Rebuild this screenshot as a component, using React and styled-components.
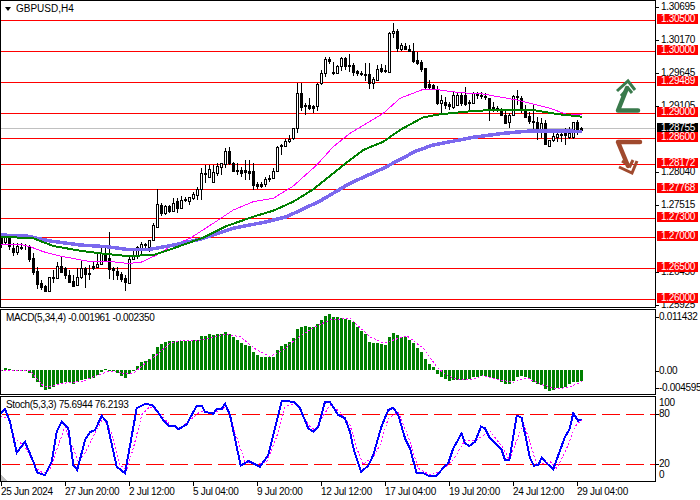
import React from "react"
import styled, { createGlobalStyle } from "styled-components"

// all chart data is kept at 3x pixels, the panes scale it down
const candles = [
  [708,745,712,732,0],[700,735,712,725,1],[705,750,712,738,0],[730,770,745,755,0],[730,765,738,755,1],[730,752,740,743,0],
  [733,750,740,742,0],[735,785,738,778,0],[760,825,775,815,0],[800,865,812,852,0],[840,870,850,860,0],[855,875,858,872,0],
  [830,875,832,872,1],[810,850,830,833,0],[785,835,797,835,1],[768,820,797,815,0],[800,835,805,825,0],[810,850,825,845,0],
  [825,860,842,858,0],[805,858,832,856,1],[782,835,805,830,1],[800,862,805,822,0],[795,840,818,823,0],[785,810,798,803,0],
  [760,805,792,802,1],[735,795,760,792,1],[745,785,760,780,0],[695,835,775,808,0],[800,838,805,810,0],[800,840,812,825,0],
  [815,845,822,838,0],[825,872,835,845,0],[770,850,778,848,1],[745,780,768,778,1],[738,778,742,768,1],[725,765,733,745,1],
  [730,755,732,735,0],[722,755,720,742,1],[670,722,676,720,1],[568,682,612,680,1],[610,650,614,638,0],[615,645,618,640,1],
  [615,640,618,632,0],[595,635,610,632,1],[595,640,602,624,0],[588,625,600,625,1],[590,605,598,601,0],[590,615,592,604,1],
  [575,600,582,594,1],[560,598,566,584,1],[505,600,520,566,1],[495,548,520,522,0],[495,535,508,530,1],[495,545,515,545,1],
  [490,530,498,520,1],[488,525,490,500,1],[445,505,452,492,1],[440,495,452,488,0],[485,515,488,514,0],[490,525,510,514,0],
  [500,530,510,518,0],[480,540,510,516,0],[480,540,512,520,0],[488,568,514,556,0],[545,565,553,557,0],[545,562,553,557,0],
  [530,560,537,553,1],[525,545,534,538,0],[505,535,512,534,1],[438,515,440,512,1],[432,465,436,438,0],[418,440,423,437,1],
  [405,430,418,424,1],[385,420,385,415,1],[250,400,280,385,1],[250,335,280,320,0],[310,345,314,318,0],[295,330,316,324,0],
  [315,340,319,323,0],[250,335,252,318,1],[210,255,220,250,1],[172,232,177,220,1],[170,190,178,183,0],[185,225,215,218,0],
  [195,222,199,218,1],[172,215,175,199,1],[170,210,173,197,0],[162,215,195,198,0],
  [190,228,195,215,0],[210,228,213,220,0],[212,228,218,223,0],[190,245,222,225,0],[190,268,222,250,0],[230,265,238,250,1],
  [195,242,206,240,1],[192,218,205,213,0],[195,218,210,213,0],[95,218,100,215,1],[70,115,93,100,1],[88,158,93,145,0],
  [130,155,135,148,1],[130,150,137,148,0],[135,155,148,152,0],[130,190,152,183,0],[155,195,180,190,0],[180,215,187,207,0],
  [205,268,205,260,0],[240,268,252,260,0],[252,268,255,265,0],[258,315,268,308,0],[285,340,300,310,1],[290,325,305,315,0],
  [305,328,312,317,0],[275,325,285,320,1],[280,320,285,315,1],[280,320,285,310,0],[262,320,285,312,0],[300,335,305,310,0],
  [275,310,280,308,1],[275,295,282,286,0],[275,295,285,288,0],[278,298,288,292,0],[295,365,295,328,0],[305,335,322,328,0],
  [318,335,325,330,0],[325,350,332,345,0],[330,370,345,368,0],[340,385,345,365,1],[285,345,288,345,1],[270,315,288,292,0],
  [288,340,293,328,0],[315,355,332,352,0],[335,370,347,362,0],[315,395,362,365,0],[350,418,367,388,0],[355,415,370,390,1],
  [360,435,370,433,0],[420,438,420,437,1],[400,428,408,420,1],[395,425,402,410,1],[390,425,402,405,0],[385,435,400,405,0],
  [380,415,398,410,1],[365,415,367,412,1],[360,405,367,390,0],[380,395,385,390,0],
]

const magenta = [
  [0,733],[60,733],[90,740],[130,755],[180,768],[260,783],[320,783],[380,790],[420,788],[470,765],[520,735],[570,715],
  [640,670],[700,630],[760,605],[820,595],[880,558],[950,495],[1000,440],[1050,400],[1150,340],[1200,295],[1270,268],
  [1320,270],[1380,278],[1450,282],[1550,300],[1650,325],[1700,343],[1745,345],
]
const green = [
  [0,710],[100,715],[160,738],[240,752],[300,760],[380,768],[460,765],[520,745],[610,713],[680,678],[760,650],[820,632],
  [880,605],[940,568],[1000,520],[1050,480],[1090,450],[1150,425],[1200,390],[1270,352],[1320,343],[1420,333],[1480,330],
  [1600,330],[1670,342],[1745,350],
]
const purple = [
  [0,705],[80,708],[150,723],[240,735],[320,740],[380,748],[450,748],[510,737],[600,718],[700,685],[800,665],[860,650],
  [960,603],[1050,550],[1150,505],[1250,452],[1300,435],[1420,412],[1510,400],[1590,393],[1745,394],
]

const macdBars = [
  198,190,192,194,195,195,195,205,218,232,245,254,252,247,237,233,232,232,238,232,225,223,222,218,210,200,192,197,194,205,
  212,218,208,198,182,170,168,162,148,126,116,111,108,108,108,108,108,108,106,104,93,93,88,90,88,87,82,88,96,105,113,120,
  124,140,150,155,155,155,155,135,123,116,110,100,72,66,64,66,67,58,46,32,27,35,36,38,42,46,52,66,78,87,111,115,115,117,
  120,97,84,90,95,97,105,115,130,140,162,177,187,207,215,222,228,226,225,224,224,222,216,215,213,212,215,219,222,230,236,
  236,228,216,214,216,222,232,238,240,252,258,254,250,250,245,238,232,230,229,
]
const macdSignal = [
  [0,198],[30,195],[90,197],[130,243],[160,243],[190,235],[250,228],[290,212],[330,198],[370,205],[400,205],[430,180],
  [470,150],[510,115],[540,108],[600,105],[680,88],[720,95],[770,135],[810,155],[850,135],[890,100],[940,68],[990,45],
  [1050,40],[1110,95],[1150,115],[1220,92],[1270,130],[1310,185],[1340,212],[1380,224],[1410,224],[1450,212],[1500,225],
  [1540,232],[1580,218],[1620,237],[1670,252],[1710,246],[1745,230],
]

const stochMain = [
  [0,328],[15,312],[30,350],[50,443],[75,410],[100,470],[112,503],[135,510],[155,470],[170,380],[185,350],[205,370],[220,480],
  [232,495],[255,405],[270,382],[285,375],[305,333],[320,350],[350,485],[375,505],[385,450],[410,310],[437,296],[460,302],
  [490,345],[505,362],[525,362],[535,373],[560,358],[590,302],[605,302],[615,320],[640,326],[650,312],[665,312],[675,296],
  [690,330],[722,482],[745,468],[780,485],[805,450],[845,288],[880,290],[900,310],[925,370],[940,380],[955,365],[975,290],
  [990,292],[1015,330],[1035,340],[1050,380],[1062,437],[1083,500],[1105,482],[1120,450],[1145,362],[1165,315],[1180,308],
  [1195,330],[1215,400],[1230,430],[1250,505],[1270,505],[1285,512],[1310,512],[1330,488],[1345,475],[1360,430],[1385,385],
  [1395,415],[1408,423],[1425,410],[1443,365],[1455,370],[1470,400],[1505,435],[1515,465],[1528,465],[1550,332],[1565,338],
  [1590,460],[1602,482],[1615,480],[1625,458],[1640,475],[1660,492],[1695,395],[1708,375],[1720,325],[1735,348],[1745,342],
]
const stochSignal = [
  [0,335],[25,340],[45,400],[75,425],[110,490],[130,505],[150,495],[175,420],[195,365],[215,420],[235,470],[255,445],[290,375],
  [310,340],[335,385],[360,480],[380,495],[400,430],[425,330],[450,305],[480,325],[510,360],[540,370],[570,345],[600,320],
  [640,325],[680,305],[705,380],[735,470],[770,478],[800,470],[830,395],[855,305],[890,295],[925,360],[945,375],[965,340],
  [990,300],[1020,320],[1050,360],[1070,430],[1090,478],[1120,455],[1140,420],[1165,340],[1195,322],[1225,395],[1255,490],
  [1290,510],[1320,500],[1360,465],[1395,405],[1430,405],[1470,378],[1510,430],[1528,465],[1570,355],[1590,410],[1610,480],
  [1650,470],[1670,490],[1700,430],[1725,365],[1745,345],
]

const levels = [
  { price: "1.30500", y: 20 }, { price: "1.30000", y: 51 }, { price: "1.29489", y: 82 }, { price: "1.29000", y: 113 },
  { price: "1.28600", y: 138 }, { price: "1.28172", y: 164 }, { price: "1.27768", y: 189 }, { price: "1.27300", y: 218 },
  { price: "1.27000", y: 237 }, { price: "1.26500", y: 268 }, { price: "1.26000", y: 299 },
]
const priceTicks = [
  { price: "1.30695", y: 7 }, { price: "1.30170", y: 40 }, { price: "1.29645", y: 73 }, { price: "1.29105", y: 106 },
  { price: "1.28040", y: 172 }, { price: "1.27515", y: 205 }, { price: "1.26450", y: 272 }, { price: "1.25925", y: 305 },
]
const macdTicks = [
  { label: "0.011432", y: 317 }, { label: "0.00", y: 371 }, { label: "-0.004595", y: 388 },
]
const stochTicks = [
  { label: "100", y: 403, tick: false }, { label: "80", y: 414, tick: true },
  { label: "20", y: 464, tick: true }, { label: "0", y: 475, tick: false },
]
const dates = [
  "25 Jun 2024", "27 Jun 20:00", "2 Jul 12:00", "5 Jul 04:00", "9 Jul 20:00",
  "12 Jul 12:00", "17 Jul 04:00", "19 Jul 20:00", "24 Jul 12:00", "29 Jul 04:00",
]

const toPoints = (line, top = 0) =>
  line.map(([x, y]) => `${(x / 3).toFixed(1)},${(top + y / 3).toFixed(1)}`).join(" ")

const barX = (i) => 1 + 4 * i

const GlobalStyle = createGlobalStyle`
  html, body {
    margin: 0;
    background: #fff;
  }
`

const Terminal = styled.div`
  width: 700px;
  height: 500px;
  overflow: hidden;
  background: #fff;
  color: #000;
  font-family: "Liberation Sans", Arial, sans-serif;
  font-size: 10px;
  letter-spacing: -0.3px;
`

const PaneRow = styled.div`
  display: flex;
  height: ${(p) => p.$height}px;
  margin-bottom: 1px;
`

const Plot = styled.div`
  position: relative;
  flex: none;
  width: 656px;
  box-sizing: border-box;
  border: 1px solid #000;
`

const Canvas = styled.svg`
  display: block;
  width: 654px;
  height: 100%;
`

const PaneTitle = styled.div`
  position: absolute;
  left: ${(p) => (p.$main ? 15 : 5)}px;
  top: 2px;
  line-height: 12px;
  white-space: nowrap;
  letter-spacing: ${(p) => (p.$main ? "0" : "-0.35px")};
`

const MenuCaret = styled.div`
  position: absolute;
  left: 4px;
  top: 6px;
  border-top: 4px solid #000;
  border-left: 3.5px solid transparent;
  border-right: 3.5px solid transparent;
`

const Scale = styled.div`
  position: relative;
  flex: 1;
`

const ScaleTick = styled.div`
  position: absolute;
  left: 0;
  width: 3px;
  height: 1px;
  background: #000;
`

const ScaleLabel = styled.div`
  position: absolute;
  left: ${(p) => (p.$price ? 5 : 3)}px;
  height: 10px;
  line-height: 10px;
  white-space: nowrap;
`

const PriceTag = styled.div`
  position: absolute;
  left: 1px;
  width: 41px;
  height: 10px;
  line-height: 10px;
  padding-left: 4px;
  box-sizing: border-box;
  background: ${(p) => (p.$current ? "#000" : "#f00")};
  color: #fff;
`

const TimeAxis = styled.div`
  display: flex;
  padding-left: 1px;
  margin-top: -1px;
`

const TimeCell = styled.div`
  position: relative;
  flex: none;
  width: 64px;
  height: 18px;
  line-height: 18px;
  white-space: nowrap;
  padding-top: 1px;

  &::before {
    content: "";
    position: absolute;
    left: 0;
    top: 0;
    width: 1px;
    height: 4px;
    background: #000;
  }
`

const Candle = ({ bar, index }) => {
  const [high, low, top, bottom, bull] = bar
  const x = barX(index)
  const yTop = Math.round(top / 3)
  const height = Math.max(Math.round(bottom / 3) - yTop, 0)
  return (
    <g>
      <rect x={x} y={Math.round(high / 3)} width="1" height={Math.round((low - high) / 3)} fill="#000" />
      <rect
        x={x - 0.5}
        y={yTop + 0.5}
        width="2"
        height={height}
        fill={bull ? "#fff" : "#000"}
        stroke="#000"
      />
    </g>
  )
}

const PriceChart = () => (
  <Canvas viewBox="1 1 654 306">
    <g shapeRendering="crispEdges">
      <line x1="0" x2="655" y1="128.5" y2="128.5" stroke="#c0c0c0" />
      {levels.map((l) => (
        <line key={l.price} x1="0" x2="655" y1={l.y + 0.5} y2={l.y + 0.5} stroke="#f00" />
      ))}
      {candles.map((bar, i) => <Candle key={i} bar={bar} index={i} />)}
      <polyline points={toPoints(magenta)} fill="none" stroke="#f0f" strokeWidth="1" />
      <polyline points={toPoints(purple)} fill="none" stroke="#7b68ee" strokeWidth="3.5" />
      <polyline points={toPoints(green)} fill="none" stroke="#008000" strokeWidth="2" />
    </g>
    <path d="M638 110.5 H618 L627 88" fill="none" stroke="#3a7a4c" strokeWidth="4.5" strokeLinecap="round" strokeLinejoin="round" />
    <path d="M617 91 L628 81 L635 90 M621 96 L628 88 L632 93" fill="none" stroke="#3a7a4c" strokeWidth="3" />
    <path d="M640 142 H618 L628 166" fill="none" stroke="#a04a2e" strokeWidth="4.5" strokeLinecap="round" strokeLinejoin="round" />
    <path d="M619 167 L632 173 L637 161 M622 161 L630 166 L633 160" fill="none" stroke="#a04a2e" strokeWidth="3" />
  </Canvas>
)

const MacdChart = () => (
  <Canvas viewBox="1 310 654 84">
    <g shapeRendering="crispEdges" fill="#008000">
      {macdBars.map((v, i) => {
        const y = 305 + v / 3
        const zero = 370
        return <rect key={i} x={barX(i) - 1} y={Math.min(y, zero)} width="3" height={Math.max(Math.abs(y - zero), 1)} />
      })}
    </g>
    <polyline points={toPoints(macdSignal, 305)} fill="none" stroke="#f0f" strokeWidth="1" strokeDasharray="2 2" shapeRendering="crispEdges" />
  </Canvas>
)

const StochChart = () => (
  <Canvas viewBox="1 397 654 84">
    <g shapeRendering="crispEdges">
      <line x1="2" x2="655" y1="414.5" y2="414.5" stroke="#f00" strokeDasharray="18 6" />
      <line x1="2" x2="655" y1="464.5" y2="464.5" stroke="#f00" strokeDasharray="18 6" />
      <polygon points="1,475 1,481 7,481" fill="#c0c0c0" />
      <polyline points={toPoints(stochSignal, 305)} fill="none" stroke="#f0f" strokeWidth="1" strokeDasharray="2 2" />
      <polyline points={toPoints(stochMain, 305)} fill="none" stroke="#00f" strokeWidth="2" />
    </g>
  </Canvas>
)

export default function App() {
  return (
    <Terminal>
      <GlobalStyle />

      <PaneRow $height={308}>
        <Plot>
          <MenuCaret />
          <PaneTitle $main>GBPUSD,H4</PaneTitle>
          <PriceChart />
        </Plot>
        <Scale>
          {priceTicks.map((t) => (
            <React.Fragment key={t.price}>
              <ScaleTick style={{ top: t.y }} />
              <ScaleLabel $price style={{ top: t.y - 5 }}>{t.price}</ScaleLabel>
            </React.Fragment>
          ))}
          <PriceTag $current style={{ top: 123 }}>1.28755</PriceTag>
          {levels.map((l) => (
            <PriceTag key={l.price} style={{ top: l.y - 6 }}>{l.price}</PriceTag>
          ))}
        </Scale>
      </PaneRow>

      <PaneRow $height={86}>
        <Plot>
          <PaneTitle>MACD(5,34,4) -0.001961 -0.002350</PaneTitle>
          <MacdChart />
        </Plot>
        <Scale>
          {macdTicks.map((t) => (
            <React.Fragment key={t.label}>
              <ScaleTick style={{ top: t.y - 309 }} />
              <ScaleLabel style={{ top: t.y - 309 - 5 }}>{t.label}</ScaleLabel>
            </React.Fragment>
          ))}
        </Scale>
      </PaneRow>

      <PaneRow $height={86}>
        <Plot>
          <PaneTitle>Stoch(5,3,3) 75.6944 76.2193</PaneTitle>
          <StochChart />
        </Plot>
        <Scale>
          {stochTicks.map((t) => (
            <React.Fragment key={t.label}>
              {t.tick && <ScaleTick style={{ top: t.y - 396 }} />}
              <ScaleLabel style={{ top: t.y - 396 - 5 }}>{t.label}</ScaleLabel>
            </React.Fragment>
          ))}
        </Scale>
      </PaneRow>

      <TimeAxis>
        {dates.map((d) => <TimeCell key={d}>{d}</TimeCell>)}
      </TimeAxis>
    </Terminal>
  )
}
